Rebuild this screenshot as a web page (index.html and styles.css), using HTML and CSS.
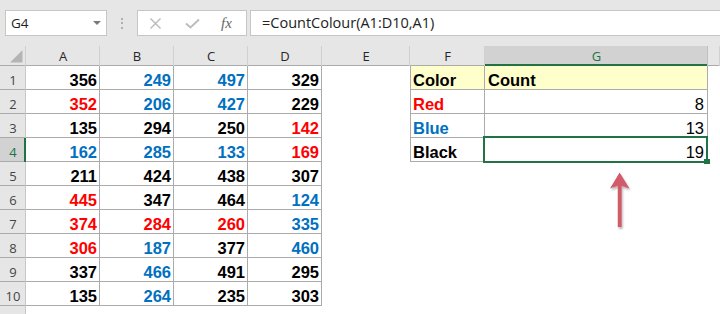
FILE: index.html
```html
<!DOCTYPE html>
<html lang="en">
  <head>
    <meta charset="UTF-8" />
    <meta name="viewport" content="width=device-width, initial-scale=1.0" />
    <title>CountColour</title>
    <link rel="stylesheet" href="styles.css">
  </head>

  <body>
    <div class="formula-bar">
      <div class="name-box"><span>G4</span><span class="caret"></span></div>
      <div class="grip"><span></span><span></span><span></span></div>
      <div class="fx-box">
        <svg class="icon-x" width="11" height="11" viewBox="0 0 11 11">
          <path d="M0.5 0.5 L10.5 10.5 M10.5 0.5 L0.5 10.5" />
        </svg>
        <svg class="icon-ok" width="15" height="11" viewBox="0 0 15 11">
          <path d="M1 5.5 L5.5 9.5 L14 1.5" />
        </svg>
        <span class="fx">fx</span>
      </div>
      <div class="formula">=CountColour(A1:D10,A1)</div>
    </div>

    <div class="sheet">
      <!-- column headers -->
      <div class="corner">
        <svg width="26" height="20" viewBox="0 0 26 20">
          <path d="M10 16.5 L22.5 16.5 L22.5 4 Z" fill="#b4b4b4" />
        </svg>
      </div>
      <div class="ch">A</div>
      <div class="ch">B</div>
      <div class="ch">C</div>
      <div class="ch">D</div>
      <div class="ch">E</div>
      <div class="ch">F</div>
      <div class="ch active">G</div>
      <div class="ch"></div>

      <!-- row 1 -->
      <div class="rh">1</div>
      <div class="c bd">356</div>
      <div class="c bd blue">249</div>
      <div class="c bd blue">497</div>
      <div class="c bd">329</div>
      <div class="c"></div>
      <div class="c bd lf yel left">Color</div>
      <div class="c bd yel left">Count</div>
      <div class="c"></div>

      <!-- row 2 -->
      <div class="rh">2</div>
      <div class="c bd red">352</div>
      <div class="c bd blue">206</div>
      <div class="c bd blue">427</div>
      <div class="c bd">229</div>
      <div class="c"></div>
      <div class="c bd lf left red">Red</div>
      <div class="c bd num">8</div>
      <div class="c"></div>

      <!-- row 3 -->
      <div class="rh">3</div>
      <div class="c bd">135</div>
      <div class="c bd">294</div>
      <div class="c bd">250</div>
      <div class="c bd red">142</div>
      <div class="c"></div>
      <div class="c bd lf left blue">Blue</div>
      <div class="c bd num">13</div>
      <div class="c"></div>

      <!-- row 4 -->
      <div class="rh active">4</div>
      <div class="c bd blue">162</div>
      <div class="c bd blue">285</div>
      <div class="c bd blue">133</div>
      <div class="c bd red">169</div>
      <div class="c"></div>
      <div class="c bd lf left">Black</div>
      <div class="c bd num sel">19</div>
      <div class="c"></div>

      <!-- row 5 -->
      <div class="rh">5</div>
      <div class="c bd">211</div>
      <div class="c bd">424</div>
      <div class="c bd">438</div>
      <div class="c bd">307</div>
      <div class="c"></div>
      <div class="c"></div>
      <div class="c"></div>
      <div class="c"></div>

      <!-- row 6 -->
      <div class="rh">6</div>
      <div class="c bd red">445</div>
      <div class="c bd">347</div>
      <div class="c bd">464</div>
      <div class="c bd blue">124</div>
      <div class="c"></div>
      <div class="c"></div>
      <div class="c"></div>
      <div class="c"></div>

      <!-- row 7 -->
      <div class="rh">7</div>
      <div class="c bd red">374</div>
      <div class="c bd red">284</div>
      <div class="c bd red">260</div>
      <div class="c bd blue">335</div>
      <div class="c"></div>
      <div class="c"></div>
      <div class="c"></div>
      <div class="c"></div>

      <!-- row 8 -->
      <div class="rh">8</div>
      <div class="c bd red">306</div>
      <div class="c bd blue">187</div>
      <div class="c bd">377</div>
      <div class="c bd blue">460</div>
      <div class="c"></div>
      <div class="c"></div>
      <div class="c"></div>
      <div class="c"></div>

      <!-- row 9 -->
      <div class="rh">9</div>
      <div class="c bd">337</div>
      <div class="c bd blue">466</div>
      <div class="c bd">491</div>
      <div class="c bd">295</div>
      <div class="c"></div>
      <div class="c"></div>
      <div class="c"></div>
      <div class="c"></div>

      <!-- row 10 -->
      <div class="rh">10</div>
      <div class="c bd">135</div>
      <div class="c bd blue">264</div>
      <div class="c bd">235</div>
      <div class="c bd">303</div>
      <div class="c"></div>
      <div class="c"></div>
      <div class="c"></div>
      <div class="c"></div>

      <!-- row 11 -->
      <div class="rh">11</div>
      <div class="c"></div>
      <div class="c"></div>
      <div class="c"></div>
      <div class="c"></div>
      <div class="c"></div>
      <div class="c"></div>
      <div class="c"></div>
      <div class="c"></div>

      <!-- red arrow pointing at the result -->
      <svg class="arrow" width="40" height="70" viewBox="0 0 40 70">
        <rect x="17.8" y="19" width="3.8" height="43" />
        <path d="M19.6 7.5 L29.5 23.5 L19.6 20 L10 23.5 Z" />
      </svg>
    </div>
  </body>
</html>
```

FILE: styles.css
```css
body {
  margin: 0;
  width: 720px;
  height: 314px;
  overflow: hidden;
  background: #fff;
  font-family: "Open Sans", sans-serif;
}

/* formula bar */
.formula-bar {
  display: flex;
  align-items: flex-start;
  height: 46px;
  box-sizing: border-box;
  padding: 10px 0 0 5px;
  background: #e6e6e6;
}

.name-box {
  width: 102px;
  height: 26px;
  box-sizing: border-box;
  border: 1px solid #c6c6c6;
  background: #fff;
  display: flex;
  align-items: center;
  justify-content: space-between;
  padding: 0 5px 0 5px;
  font-size: 13.5px;
  color: #222;
}

.caret {
  width: 0;
  height: 0;
  border-left: 4px solid transparent;
  border-right: 4px solid transparent;
  border-top: 4px solid #7a7a7a;
}

.grip {
  width: 30px;
  height: 26px;
  display: flex;
  flex-direction: column;
  align-items: center;
  justify-content: center;
  gap: 2.5px;
}

.grip span {
  width: 2px;
  height: 2px;
  background: #b0b0b0;
}

.fx-box {
  width: 110px;
  height: 26px;
  box-sizing: border-box;
  border: 1px solid #c6c6c6;
  background: #fff;
  display: flex;
  align-items: center;
}

.icon-x {
  margin-left: 12px;
  fill: none;
  stroke: #b8b8b8;
  stroke-width: 1.3;
}

.icon-ok {
  margin-left: 24px;
  fill: none;
  stroke: #bdbdbd;
  stroke-width: 2;
}

.fx {
  margin-left: 21px;
  font-family: "Liberation Serif", serif;
  font-style: italic;
  font-size: 15px;
  color: #666;
}

.formula {
  flex: 1;
  height: 26px;
  box-sizing: border-box;
  margin-left: 3px;
  border: 1px solid #c6c6c6;
  border-right: none;
  background: #fff;
  padding-left: 11px;
  font-size: 14.5px;
  line-height: 24px;
  color: #222;
}

/* sheet grid */
.sheet {
  position: relative;
  display: grid;
  grid-template-columns: 26px 74px 74px 74px 74px 88px 75px 223px 12px;
  grid-template-rows: 20px repeat(11, 24px);
}

.corner {
  background: #e6e6e6;
  box-shadow: inset -1px 0 0 #d0d0d0, inset 0 -1px 0 #ababab;
}

.corner svg {
  display: block;
}

.ch {
  display: flex;
  align-items: center;
  justify-content: center;
  background: #e6e6e6;
  box-shadow: inset -1px 0 0 #d0d0d0, inset 0 -1px 0 #ababab;
  font-size: 13px;
  line-height: 19px;
  color: #262626;
}

.ch.active {
  background: #d2d2d2;
  color: #217346;
  box-shadow: inset -1px 0 0 #c0c0c0, inset 0 -2px 0 #217346;
}

.rh {
  display: flex;
  align-items: flex-end;
  justify-content: center;
  padding-bottom: 2px;
  box-sizing: border-box;
  background: #e6e6e6;
  box-shadow: inset -1px 0 0 #c8c8c8, inset 0 -1px 0 #ababab;
  font-size: 13px;
  line-height: 16px;
  color: #444;
}

.rh.active {
  background: #d2d2d2;
  color: #217346;
  box-shadow: inset -2px 0 0 #217346, inset 0 -1px 0 #ababab;
}

.c {
  display: flex;
  align-items: flex-end;
  justify-content: flex-end;
  padding: 0 3px;
  font-family: "Liberation Sans", Arial, sans-serif;
  font-weight: bold;
  font-size: 16.5px;
  line-height: 19px;
  color: #000;
  white-space: nowrap;
}

.bd {
  box-shadow: inset -1px -1px 0 #ababab;
}

.bd.lf {
  box-shadow: inset 1px 0 0 #ababab, inset -1px -1px 0 #ababab;
}

.left {
  justify-content: flex-start;
}

.num {
  font-weight: normal;
  padding-right: 4px;
}

.yel {
  background: #ffffcc;
}

.red {
  color: #ff0000;
}

.blue {
  color: #0070c0;
}

/* selected cell */
.sel {
  position: relative;
}

.sel::before {
  content: "";
  position: absolute;
  left: -2px;
  top: -2px;
  right: 0;
  bottom: -1px;
  border: 2px solid #217346;
}

.sel::after {
  content: "";
  position: absolute;
  right: -2px;
  bottom: -2px;
  width: 6px;
  height: 5px;
  background: #217346;
}

.arrow {
  position: absolute;
  left: 600px;
  top: 119px;
  fill: #d45a6a;
  filter: drop-shadow(1px 2px 1px rgba(0, 0, 0, 0.3));
}
```
